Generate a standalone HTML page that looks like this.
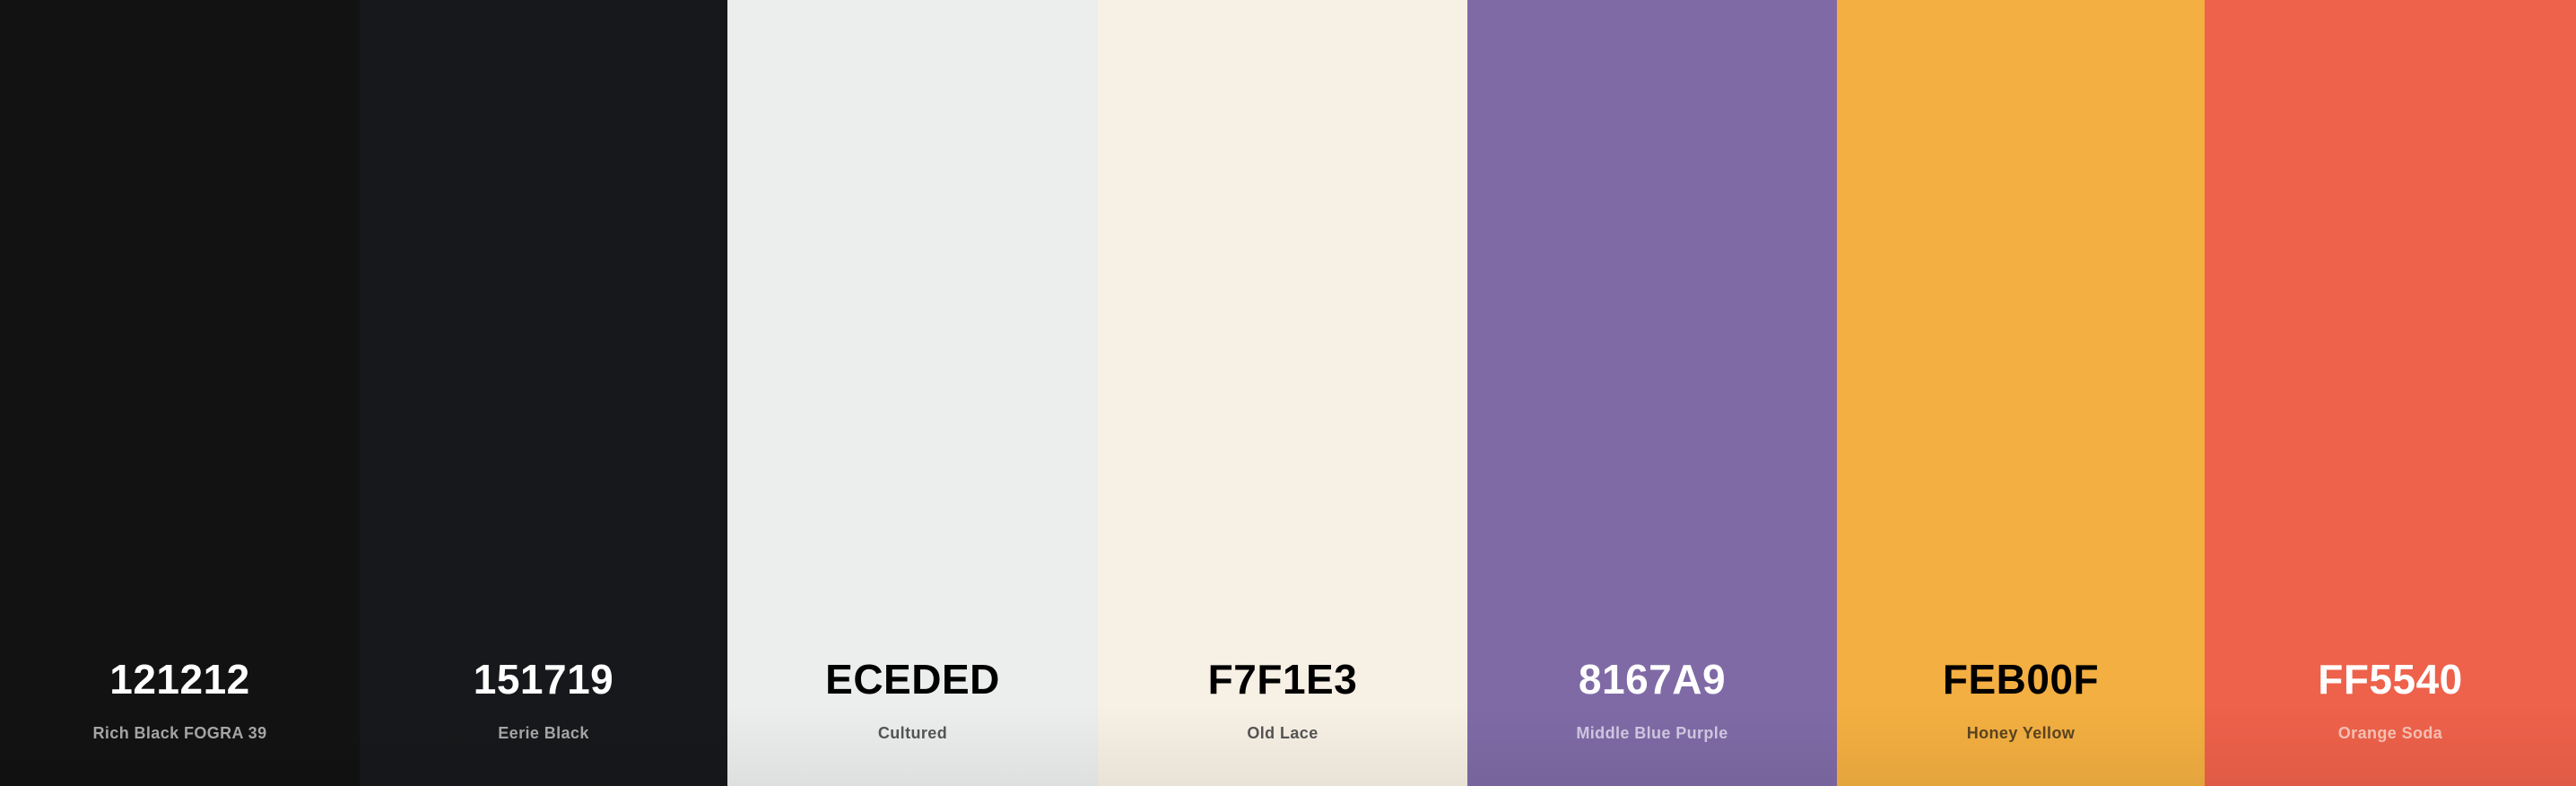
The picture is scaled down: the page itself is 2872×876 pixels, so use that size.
<!DOCTYPE html>
<html><head><meta charset="utf-8"><style>
html,body{margin:0;padding:0;width:2872px;height:876px;overflow:hidden;font-family:"Liberation Sans",sans-serif}
.row{display:flex;width:2872px;height:876px}
.c{position:relative;height:876px;flex:0 0 auto}
.c::after{content:"";position:absolute;left:0;right:0;bottom:0;height:90px;background:linear-gradient(rgba(0,0,0,0),rgba(0,0,0,0.06))}
.h{position:absolute;left:0;right:0;top:725px;text-align:center;font-size:46px;font-weight:700;letter-spacing:0.5px;line-height:64px}
.n{position:absolute;left:0;right:0;top:804px;text-align:center;font-size:18px;font-weight:700;letter-spacing:0.4px;line-height:26px}
</style></head><body><div class="row">
<div class="c" style="width:401px;background:#121212"><div class="h" style="color:#fff">121212</div><div class="n" style="color:#a8a8a8">Rich Black FOGRA 39</div></div>
<div class="c" style="width:410px;background:#17181b"><div class="h" style="color:#fff">151719</div><div class="n" style="color:#a8a8a8">Eerie Black</div></div>
<div class="c" style="width:413px;background:#eceded"><div class="h" style="color:#000">ECEDED</div><div class="n" style="color:#555">Cultured</div></div>
<div class="c" style="width:412px;background:#f7f0e4"><div class="h" style="color:#000">F7F1E3</div><div class="n" style="color:#555">Old Lace</div></div>
<div class="c" style="width:412px;background:#7f6aa6"><div class="h" style="color:#fff">8167A9</div><div class="n" style="color:#d2c9e3">Middle Blue Purple</div></div>
<div class="c" style="width:410px;background:#f3af41"><div class="h" style="color:#000">FEB00F</div><div class="n" style="color:#5a4420">Honey Yellow</div></div>
<div class="c" style="width:414px;background:#ee614a"><div class="h" style="color:#fff">FF5540</div><div class="n" style="color:#f9c3b6">Orange Soda</div></div>
</div></body></html>
